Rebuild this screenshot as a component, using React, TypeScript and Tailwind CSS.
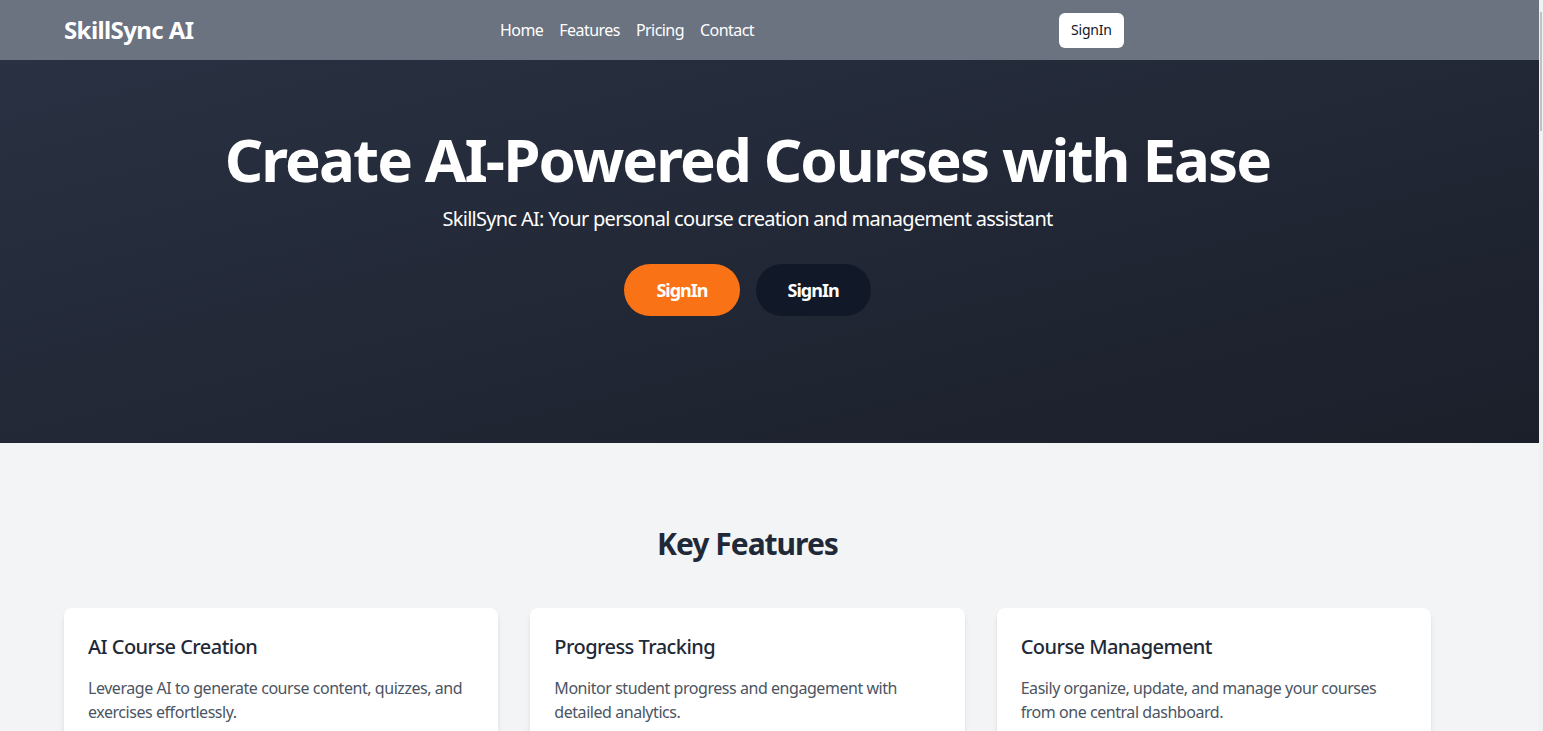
import React from "react";

const font = { fontFamily: '"Noto Sans", "Open Sans", Arial, sans-serif' };

const features = [
  {
    title: "AI Course Creation",
    desc: "Leverage AI to generate course content, quizzes, and exercises effortlessly.",
  },
  {
    title: "Progress Tracking",
    desc: "Monitor student progress and engagement with detailed analytics.",
  },
  {
    title: "Course Management",
    desc: "Easily organize, update, and manage your courses from one central dashboard.",
  },
];

export default function App() {
  return (
    <div className="flex h-[731px] w-full overflow-hidden bg-[#f3f4f6]" style={font}>
      <div className="flex min-w-0 flex-1 flex-col">
        <header className="flex h-[60px] shrink-0 items-center bg-[#6b7280] pl-16">
          <div className="w-[436px] text-2xl font-bold tracking-[-0.6px] text-white">SkillSync AI</div>
          <nav className="flex w-[559px] gap-4 text-base tracking-[-0.55px] text-white">
            <a>Home</a>
            <a>Features</a>
            <a>Pricing</a>
            <a>Contact</a>
          </nav>
          <button className="h-[35px] rounded-md bg-white px-3 text-sm tracking-[-0.2px] text-gray-900">SignIn</button>
        </header>
        <section className="flex h-[383px] shrink-0 flex-col items-center bg-gradient-to-br from-[#293142] to-[#1b1f2a] pt-[69px]">
          <div className="ml-16 flex w-[1367px] flex-col items-center self-start">
            <h1 className="text-6xl font-bold leading-none tracking-[-1.9px] text-white">
              Create AI-Powered Courses with Ease
            </h1>
            <p className="mt-[16px] text-xl tracking-[-0.7px] text-white">
              SkillSync AI: Your personal course creation and management assistant
            </p>
            <div className="mt-[31px] flex gap-4">
              <button className="rounded-full bg-[#f97316] px-8 py-3 text-lg font-bold tracking-[-1px] text-white">SignIn</button>
              <button className="rounded-full bg-[#111827] px-8 py-3 text-lg font-bold tracking-[-1px] text-white">SignIn</button>
            </div>
          </div>
        </section>
        <section className="flex-1 bg-[#f3f4f6] pt-[83px]">
          <div className="ml-16 w-[1367px]">
            <h2 className="text-center text-3xl font-bold tracking-[-1px] text-[#1f2937]">Key Features</h2>
            <div className="mt-[46px] grid grid-cols-3 gap-8">
              {features.map((f) => (
                <div key={f.title} className="h-[160px] rounded-lg bg-white px-6 pb-6 pt-[25px] shadow-md">
                  <h3 className="text-xl font-medium tracking-[-0.55px] text-[#1f2937]">{f.title}</h3>
                  <p className="mt-[15px] text-base leading-6 tracking-[-0.45px] text-[#4b5563]">{f.desc}</p>
                </div>
              ))}
            </div>
          </div>
        </section>
      </div>
      <div className="relative w-1 shrink-0 bg-[#f1f1f1]">
        <div className="absolute left-[1px] top-[12px] h-[119px] w-[2px] bg-[#c1c1c1]" />
      </div>
    </div>
  );
}
